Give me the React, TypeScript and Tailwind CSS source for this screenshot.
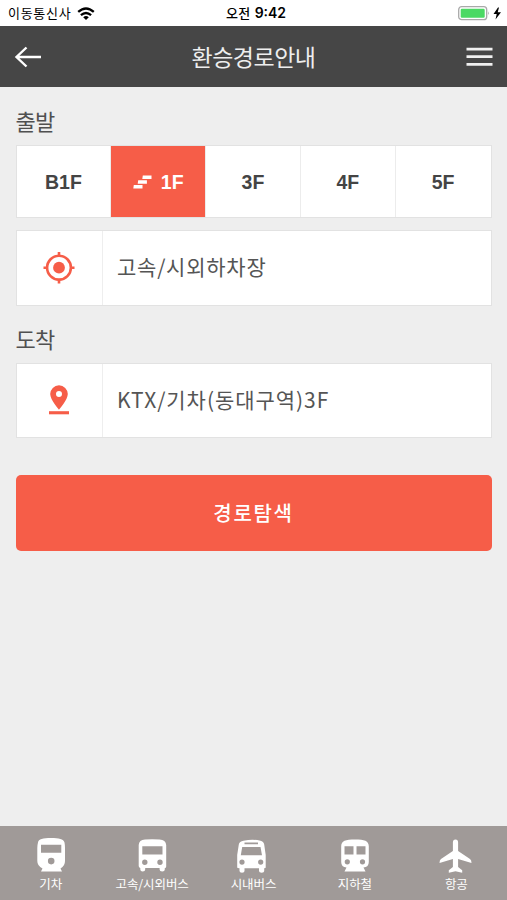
import { clsx } from "clsx";

const floors = ["B1F", "1F", "3F", "4F", "5F"];

function TrainIcon() {
  return (
    <svg width="34" height="36" viewBox="0 0 34 36" fill="white">
      <path fillRule="evenodd" d="M17 1C9 1 4.500 2 4 5.500Q3.300 8 3.300 11V24Q3.300 29 8.500 31.500L7 34.500H28L26.500 31.500Q31 29 31 24V11Q31 8 30.500 5.500C29.500 2 25 1 17 1ZM7 7.700H27.300V15.800H7ZM17.200 20.800A3.300 3.300 0 1 1 17.200 27.400A3.300 3.300 0 1 1 17.200 20.800Z" />
    </svg>
  );
}

function BusIcon() {
  return (
    <svg width="34" height="36" viewBox="0 0 34 36" fill="white">
      <path fillRule="evenodd" d="M10 2.600Q17 2.100 24.500 2.600Q30.800 3.100 31.200 8V29.500Q31.200 31 29.800 31V32.500Q29.800 34.500 27.200 34.500Q24.600 34.500 24.600 32.500V31H10.200V32.500Q10.200 34.500 7.700 34.500Q5.300 34.500 5.300 32.500V31Q3.700 30.500 3.700 29V8Q4 3.100 10 2.600ZM7.300 9.200H27.500V17.600H7.300ZM9.800 22.500A2.700 2.700 0 1 0 9.800 27.900A2.700 2.700 0 1 0 9.800 22.500ZM25 22.500A2.700 2.700 0 1 0 25 27.900A2.700 2.700 0 1 0 25 22.500Z" />
    </svg>
  );
}

function CityBusIcon() {
  return (
    <svg width="34" height="36" viewBox="0 0 34 36" fill="white">
      <path fillRule="evenodd" d="M7.500 3.700Q17 1.900 24.500 3.700Q27.500 4.200 28.200 7.500L29.700 18V30.500Q29.700 31.300 28.200 31.300V34Q28.200 35.800 25.700 35.800Q23 35.800 23 34V31.300H8.500V34Q8.500 35.800 6 35.800Q3.500 35.800 3.500 34V31.300Q1.200 31.300 1.200 30.500V18L2.800 7.500Q3.500 4.200 7.500 3.700ZM8.500 5.600V7.200H22V5.600ZM6.200 10L4.800 18.200H26L24.500 10ZM6 22.500A2.600 2.600 0 1 0 6 27.700A2.600 2.600 0 1 0 6 22.500ZM24.700 22.500A2.600 2.600 0 1 0 24.700 27.700A2.600 2.600 0 1 0 24.700 22.500Z" />
    </svg>
  );
}

function SubwayIcon() {
  return (
    <svg width="34" height="36" viewBox="0 0 34 36" fill="white">
      <path fillRule="evenodd" d="M17 2.500C7.500 2.500 3.200 3.800 3.200 9.300V25Q3.200 30 8.500 30.500L6.500 34.500H27.500L25.500 30.500Q30.800 30 30.800 25V9.300C30.800 3.800 26.500 2.500 17 2.500ZM6.500 9.200H15.500V17.500H6.500ZM18.500 9.200H27.500V17.500H18.500ZM9.300 22.200A2.600 2.600 0 1 0 9.300 27.400A2.600 2.600 0 1 0 9.300 22.200ZM24.500 22.200A2.600 2.600 0 1 0 24.500 27.400A2.600 2.600 0 1 0 24.500 22.200Z" />
    </svg>
  );
}

function PlaneIcon() {
  return (
    <svg width="34" height="36" viewBox="0 0 34 36" fill="white">
      <path d="M16.500 2.500Q19.100 2.500 19.100 5.500V14L31 22Q32.500 23 32.500 26L19.100 22V30L23.200 33.200V35.700L16.500 34.200L9.800 35.700V33.200L13.900 30V22L0.500 26Q0.500 23 2 22L13.900 14V5.500Q13.900 2.500 16.500 2.500Z" />
    </svg>
  );
}

const tabs = [
  { label: "기차", icon: <TrainIcon /> },
  { label: "고속/시외버스", icon: <BusIcon /> },
  { label: "시내버스", icon: <CityBusIcon /> },
  { label: "지하철", icon: <SubwayIcon /> },
  { label: "항공", icon: <PlaneIcon /> },
];

function StatusBar() {
  return (
    <div className="grid h-[26px] grid-cols-3 items-center bg-white pl-2 pr-[5px] text-black">
      <div className="flex items-center gap-[6px]">
        <span className="-mt-px text-[13px] leading-none tracking-[0.7px]">이동통신사</span>
        <svg width="18" height="13" viewBox="0 0 18 13" fill="none" stroke="black" strokeWidth="2.300">
          <path d="M1.200 4.900Q9 -2 16.800 4.900M3.900 8.200Q9 3.800 14.100 8.200" />
          <path d="M6.200 10.200Q9 8 11.800 10.200L9 13Z" fill="black" stroke="none" />
        </svg>
      </div>
      <div className="flex items-center justify-center gap-1 pl-0.5 leading-none">
        <span className="-mt-px text-[13px] font-medium tracking-[0.4px]">오전</span>
        <span className="font-[Inter] text-[14px] font-semibold">9:42</span>
      </div>
      <div className="flex items-center justify-end">
        <svg width="44" height="16" viewBox="0 0 44 16">
          <rect x="0.700" y="1.700" width="28" height="13" rx="3" fill="white" stroke="#a9a9a9" strokeWidth="1.300" />
          <rect x="2.700" y="3.700" width="24" height="9" rx="1.200" fill="#4bd964" />
          <path d="M30 6.300Q31.800 8.200 30 10.100Z" fill="#a9a9a9" />
          <path d="M40 2.500L35.500 9.100H38.700L37.500 14.500L43 7.300H39.700L41 2.500Z" fill="black" />
        </svg>
      </div>
    </div>
  );
}

export default function App() {
  return (
    <div className="flex h-[900px] w-[507px] flex-col overflow-hidden bg-[#eeeeee] font-['Noto_Sans_CJK_KR',sans-serif]">
      <StatusBar />

      <header className="flex h-[61px] shrink-0 items-center justify-between bg-[#464646] px-[14px]">
        <svg width="28" height="22" viewBox="0 0 28 22" fill="none" stroke="white" strokeWidth="2.400">
          <path d="M12.500 1.500L2.500 11L12.500 20.500M2.500 11H27" />
        </svg>
        <h1 className="-mt-px pr-px text-[23px] leading-none tracking-[-0.5px] text-[#eeeeee]">환승경로안내</h1>
        <svg width="27" height="22" viewBox="0 0 27 22" fill="#f0f0f0">
          <path d="M0.500 1.800H26.500V4.500H0.500ZM0.500 9.300H26.500V12H0.500ZM0.500 17H26.500V19.700H0.500Z" />
        </svg>
      </header>

      <main className="flex-1 px-[15.5px] pt-[17px]">
        <h2 className="h-[41px] text-[22px] leading-[32px] tracking-[-0.7px] text-[#505050]">출발</h2>
        <div className="grid h-[73px] grid-cols-5 border border-[#e2e2e2] bg-white">
          {floors.map((floor) => (
            <div
              key={floor}
              className={clsx(
                "flex items-center justify-center border-r border-[#ececec] pt-0.5 font-['Liberation_Sans',sans-serif] text-[19.5px] font-bold last:border-r-0",
                floor === "1F" ? "bg-[#f65d48] text-white" : "text-[#444444]"
              )}
            >
              {floor === "1F" && (
                <svg className="mr-[9px]" width="19" height="15" viewBox="0 0 19 15" fill="white">
                  <path d="M9.800 0.500H18.500V4H9.300ZM5.200 5.300H13.900V8.800H4.700ZM0.800 10.100H9.500V13.600H0.300Z" />
                </svg>
              )}
              {floor}
            </div>
          ))}
        </div>

        <div className="mt-3 flex h-[76px] border border-[#e2e2e2] bg-white">
          <div className="flex w-[86px] items-center justify-center border-r border-[#eeeeee]">
            <svg width="32" height="32" viewBox="0 0 32 32" fill="none" stroke="#f65d48" strokeWidth="2.600">
              <circle cx="16" cy="15.700" r="11.900" />
              <circle cx="16" cy="15.700" r="5.900" fill="#f65d48" stroke="none" />
              <path d="M16 0V5M16 27V31.500M0.500 15.700H5M27 15.700H31.500" />
            </svg>
          </div>
          <div className="flex items-center pb-0.5 pl-[14.5px] text-[21px] tracking-[0.750px] text-[#555555]">고속/시외하차장</div>
        </div>

        <h2 className="mt-4 h-[41px] text-[22px] leading-[32px] tracking-[-0.7px] text-[#505050]">도착</h2>
        <div className="flex h-[75px] border border-[#e2e2e2] bg-white">
          <div className="flex w-[86px] items-center justify-center border-r border-[#eeeeee] pb-0.5">
            <svg width="22" height="30" viewBox="0 0 22 30" fill="#f65d48">
              <path fillRule="evenodd" d="M11 0.300A8.800 8.800 0 0 0 2.200 9.100C2.200 15 11 24.800 11 24.800S19.800 15 19.800 9.100A8.800 8.800 0 0 0 11 0.300ZM11 6A3 3 0 1 1 11 12A3 3 0 1 1 11 6Z" />
              <path d="M1 26.200H21V29.300H1Z" />
            </svg>
          </div>
          <div className="flex items-center pb-0.5 pl-[14.5px] text-[21px] tracking-[0.950px] text-[#555555]">KTX/기차(동대구역)3F</div>
        </div>

        <button className="mt-[37px] flex h-[76px] w-full items-center justify-center rounded-[5px] bg-[#f65d48] text-[20px] font-medium tracking-[1.700px] text-white">
          경로탐색
        </button>
      </main>

      <nav className="grid h-[74px] shrink-0 grid-cols-5 bg-[#a09a98] text-white">
        {tabs.map((tab) => (
          <div key={tab.label} className="flex flex-col items-center pt-[11px]">
            {tab.icon}
            <span className="mt-px text-[12.5px] leading-[20px] tracking-[-0.1px] whitespace-nowrap">{tab.label}</span>
          </div>
        ))}
      </nav>
    </div>
  );
}
